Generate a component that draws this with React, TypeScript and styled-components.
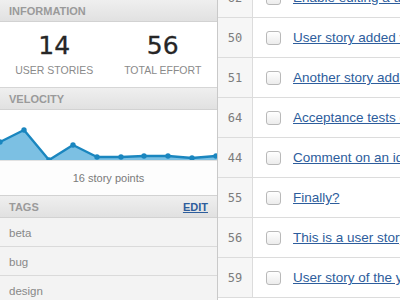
import styled, { createGlobalStyle } from "styled-components";

const GlobalStyle = createGlobalStyle`
  html, body {
    margin: 0;
    padding: 0;
    background: #ffffff;
    font-family: "Liberation Sans", Arial, sans-serif;
  }
`;

const stories = [
  { id: 62, title: "Enable editing a user story" },
  { id: 50, title: "User story added via API" },
  { id: 51, title: "Another story added" },
  { id: 64, title: "Acceptance tests on stories" },
  { id: 44, title: "Comment on an idea" },
  { id: 55, title: "Finally?" },
  { id: 56, title: "This is a user story" },
  { id: 59, title: "User story of the year" },
];

const tags = ["beta", "bug", "design"];

// points in chart coordinates (x, y from top of a 50px tall chart)
const velocity = [
  [0, 32],
  [24, 20],
  [49, 50],
  [73, 35],
  [97, 47],
  [121, 47],
  [144, 46],
  [168, 46],
  [192, 48],
  [216, 46],
];

function VelocityChart() {
  const line = velocity.map(([x, y]) => `${x},${y}`).join(" ");
  const area = `0,50 ${line} 217,50`;
  return (
    <svg width="217" height="50" viewBox="0 0 217 50">
      <polygon points={area} fill="#7cc0e3" />
      <polyline points={line} fill="none" stroke="#1a86bf" strokeWidth="2.4" strokeLinejoin="round" />
      {velocity.map(([x, y]) => (
        <circle key={x} cx={x} cy={y} r="2.7" fill="#1a86bf" />
      ))}
    </svg>
  );
}

export default function App() {
  return (
    <>
      <GlobalStyle />
      <Page>
        <Sidebar>
          <SectionHeader>Information</SectionHeader>
          <Stats>
            <Stat>
              <StatValue>14</StatValue>
              <StatLabel>User stories</StatLabel>
            </Stat>
            <Stat>
              <StatValue>56</StatValue>
              <StatLabel>Total effort</StatLabel>
            </Stat>
          </Stats>
          <SectionHeader>Velocity</SectionHeader>
          <Chart>
            <VelocityChart />
          </Chart>
          <ChartCaption>16 story points</ChartCaption>
          <SectionHeader>
            Tags
            <EditLink href="#">Edit</EditLink>
          </SectionHeader>
          <TagList>
            {tags.map((t) => (
              <Tag key={t}>{t}</Tag>
            ))}
          </TagList>
        </Sidebar>
        <Main>
          <StoryList>
            {stories.map((s) => (
              <StoryRow key={s.id}>
                <StoryId>{s.id}</StoryId>
                <StoryCell>
                  <Checkbox />
                  <StoryLink href="#">{s.title}</StoryLink>
                </StoryCell>
              </StoryRow>
            ))}
          </StoryList>
        </Main>
      </Page>
    </>
  );
}

const Page = styled.div`
  display: flex;
  width: 400px;
  height: 300px;
  overflow: hidden;
`;

const Sidebar = styled.aside`
  width: 217px;
  flex-shrink: 0;
  border-right: 1px solid #c9c9c9;
  background: #ffffff;
  display: flex;
  flex-direction: column;
`;

const SectionHeader = styled.div`
  height: 22px;
  flex-shrink: 0;
  padding: 0 9px;
  display: flex;
  align-items: center;
  justify-content: space-between;
  background: linear-gradient(#efefef, #e1e1e1);
  border-bottom: 1px solid #d2d2d2;
  color: #9a9a9a;
  font-size: 11px;
  font-weight: bold;
  text-transform: uppercase;
  box-sizing: border-box;
`;

const Stats = styled.div`
  height: 66px;
  flex-shrink: 0;
  display: grid;
  grid-template-columns: 1fr 1fr;
  border-bottom: 1px solid #d6d6d6;
  box-sizing: border-box;
`;

const Stat = styled.div`
  display: flex;
  flex-direction: column;
  align-items: center;
  padding-top: 10px;
`;

const StatValue = styled.div`
  font-family: "DejaVu Sans", sans-serif;
  font-size: 25px;
  color: #262626;
  line-height: 28px;
  -webkit-text-stroke: 0.3px #262626;
`;

const StatLabel = styled.div`
  margin-top: 4px;
  font-size: 10.5px;
  color: #8a8a8a;
  text-transform: uppercase;
`;

const Chart = styled.div`
  height: 50px;
  flex-shrink: 0;
  display: flex;
  border-bottom: 1px solid #e2e2e2;
`;

const ChartCaption = styled.div`
  height: 35px;
  flex-shrink: 0;
  display: flex;
  align-items: center;
  justify-content: center;
  font-size: 11px;
  color: #7a7a7a;
  background: #fdfdfd;
  border-bottom: 1px solid #d2d2d2;
  box-sizing: border-box;
`;

const EditLink = styled.a`
  color: #2d5d9c;
  text-decoration: underline;
  font-size: 11px;
`;

const TagList = styled.ul`
  list-style: none;
  margin: 0;
  padding: 0;
  background: #f3f3f3;
  flex: 1;
`;

const Tag = styled.li`
  height: 29px;
  padding: 1px 9px 0;
  display: flex;
  align-items: center;
  font-size: 11.5px;
  color: #888888;
  border-bottom: 1px solid #dadada;
  box-sizing: border-box;
`;

const Main = styled.main`
  flex: 1;
  overflow: hidden;
`;

const StoryList = styled.div`
  margin-top: -22px;
`;

const StoryRow = styled.div`
  height: 40px;
  display: flex;
  border-bottom: 1px solid #dcdcdc;
  box-sizing: border-box;
`;

const StoryId = styled.div`
  width: 34px;
  flex-shrink: 0;
  display: flex;
  align-items: center;
  justify-content: center;
  background: #f6f6f6;
  border-right: 1px solid #dcdcdc;
  font-family: "DejaVu Sans Mono", monospace;
  font-size: 12px;
  color: #7c7c7c;
`;

const StoryCell = styled.div`
  flex: 1;
  display: flex;
  align-items: center;
  padding-left: 13px;
  white-space: nowrap;
  overflow: hidden;
`;

const Checkbox = styled.span`
  width: 15px;
  height: 14px;
  flex-shrink: 0;
  border: 1px solid #b9b9b9;
  border-radius: 3px;
  background: linear-gradient(#ffffff, #ececec);
  box-sizing: border-box;
  margin-right: 12px;
`;

const StoryLink = styled.a`
  color: #2d5d9c;
  text-decoration: underline;
  font-size: 13.5px;
`;
